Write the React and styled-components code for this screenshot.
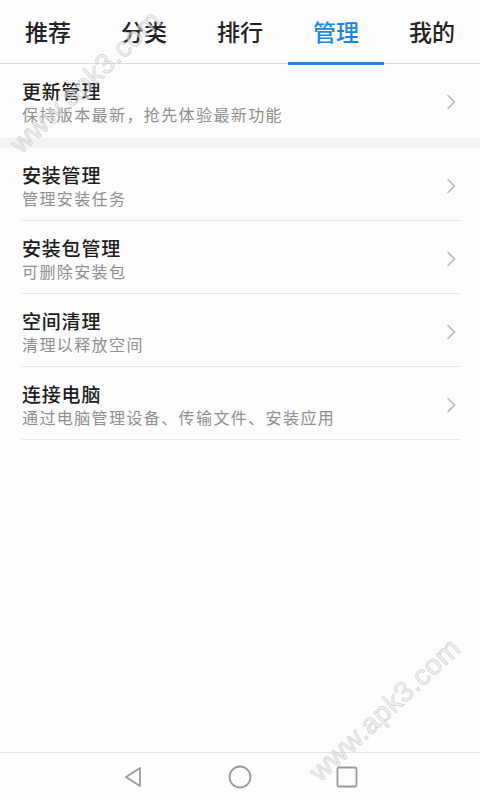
import React from "react";
import styled, { createGlobalStyle } from "styled-components";

const Global = createGlobalStyle`
  html, body { margin: 0; padding: 0; background: #fdfdfd; }
  body { font-family: "Noto Sans CJK SC", "Noto Sans", sans-serif; }
  * { box-sizing: border-box; }
`;

const Page = styled.div`
  position: relative;
  width: 480px;
  height: 800px;
  display: flex;
  flex-direction: column;
  background: #fdfdfd;
  overflow: hidden;
`;

const TabBar = styled.div`
  display: flex;
  height: 64px;
  border-bottom: 1px solid #dcdcdc;
  flex-shrink: 0;
`;

const Tab = styled.div`
  position: relative;
  flex: 1;
  display: flex;
  align-items: center;
  justify-content: center;
  padding-bottom: 1px;
  font-size: 23px;
  font-weight: 500;
  color: ${(p) => (p.$active ? "#1a85e6" : "#222")};
  &::after {
    content: "";
    display: ${(p) => (p.$active ? "block" : "none")};
    position: absolute;
    left: 0;
    right: 0;
    bottom: -2px;
    height: 3px;
    background: #1a85e6;
  }
`;

const List = styled.div`
  display: flex;
  flex-direction: column;
`;

const Band = styled.div`
  height: 10px;
  background: #f3f3f3;
`;

const Row = styled.div`
  display: flex;
  align-items: center;
  margin: 0 20px 0 22px;
  padding: 15px 3px ${(p) => (p.$first ? "13px" : "11px")} 0;
  border-bottom: ${(p) => (p.$first ? "none" : "1px solid #e6e6e6")};
`;

const Texts = styled.div`
  flex: 1;
  display: flex;
  flex-direction: column;
`;

const Title = styled.div`
  font-size: 19px;
  line-height: 24px;
  letter-spacing: 0.8px;
  font-weight: 500;
  color: #1c1c1c;
`;

const Sub = styled.div`
  font-size: 16px;
  line-height: 22px;
  letter-spacing: 1.4px;
  color: #8e8e8e;
`;

const Spacer = styled.div`
  flex: 1;
`;

const NavBar = styled.div`
  height: 48px;
  flex-shrink: 0;
  border-top: 1px solid #e2e2e2;
  display: flex;
  align-items: center;
  justify-content: center;
`;

const NavSlot = styled.div`
  width: 107px;
  display: flex;
  justify-content: center;
  align-items: center;
`;

const Watermark = styled.div`
  position: absolute;
  left: ${(p) => p.$x}px;
  top: ${(p) => p.$y}px;
  transform: translate(-50%, -50%) rotate(-43deg);
  font-family: "Liberation Sans", Arial, sans-serif;
  font-size: 28px;
  color: rgba(235, 235, 235, 0.6);
  -webkit-text-stroke: 0.7px rgba(170, 170, 170, 0.55);
  white-space: nowrap;
  pointer-events: none;
  letter-spacing: 0.5px;
`;

const Chevron = () => (
  <svg width="11" height="16" viewBox="0 0 11 16">
    <path d="M2 1.5 L8.5 8 L2 14.5" fill="none" stroke="#b8b8b8" strokeWidth="1.6" strokeLinecap="round" strokeLinejoin="round" />
  </svg>
);

const tabs = ["推荐", "分类", "排行", "管理", "我的"];
const items = [
  ["安装管理", "管理安装任务"],
  ["安装包管理", "可删除安装包"],
  ["空间清理", "清理以释放空间"],
  ["连接电脑", "通过电脑管理设备、传输文件、安装应用"],
];

export default function App() {
  return (
    <>
      <Global />
      <Page>
        <TabBar>
          {tabs.map((t) => (
            <Tab key={t} $active={t === "管理"}>{t}</Tab>
          ))}
        </TabBar>
        <List>
          <Row $first>
            <Texts>
              <Title>更新管理</Title>
              <Sub>保持版本最新，抢先体验最新功能</Sub>
            </Texts>
            <Chevron />
          </Row>
          <Band />
          {items.map(([t, s]) => (
            <Row key={t}>
              <Texts>
                <Title>{t}</Title>
                <Sub>{s}</Sub>
              </Texts>
              <Chevron />
            </Row>
          ))}
        </List>
        <Spacer />
        <NavBar>
          <NavSlot>
            <svg width="22" height="24" viewBox="0 0 22 24">
              <path d="M18 3 L4 12 L18 21 Z" fill="none" stroke="#9a9a9a" strokeWidth="1.8" strokeLinejoin="round" />
            </svg>
          </NavSlot>
          <NavSlot>
            <svg width="24" height="24" viewBox="0 0 24 24">
              <circle cx="12" cy="12" r="10.5" fill="none" stroke="#9a9a9a" strokeWidth="1.8" />
            </svg>
          </NavSlot>
          <NavSlot>
            <svg width="22" height="22" viewBox="0 0 22 22">
              <rect x="1.5" y="1.5" width="19" height="19" rx="1.5" fill="none" stroke="#9a9a9a" strokeWidth="1.8" />
            </svg>
          </NavSlot>
        </NavBar>
        <Watermark $x={86} $y={82}>www.apk3.com</Watermark>
        <Watermark $x={385} $y={710}>www.apk3.com</Watermark>
      </Page>
    </>
  );
}
